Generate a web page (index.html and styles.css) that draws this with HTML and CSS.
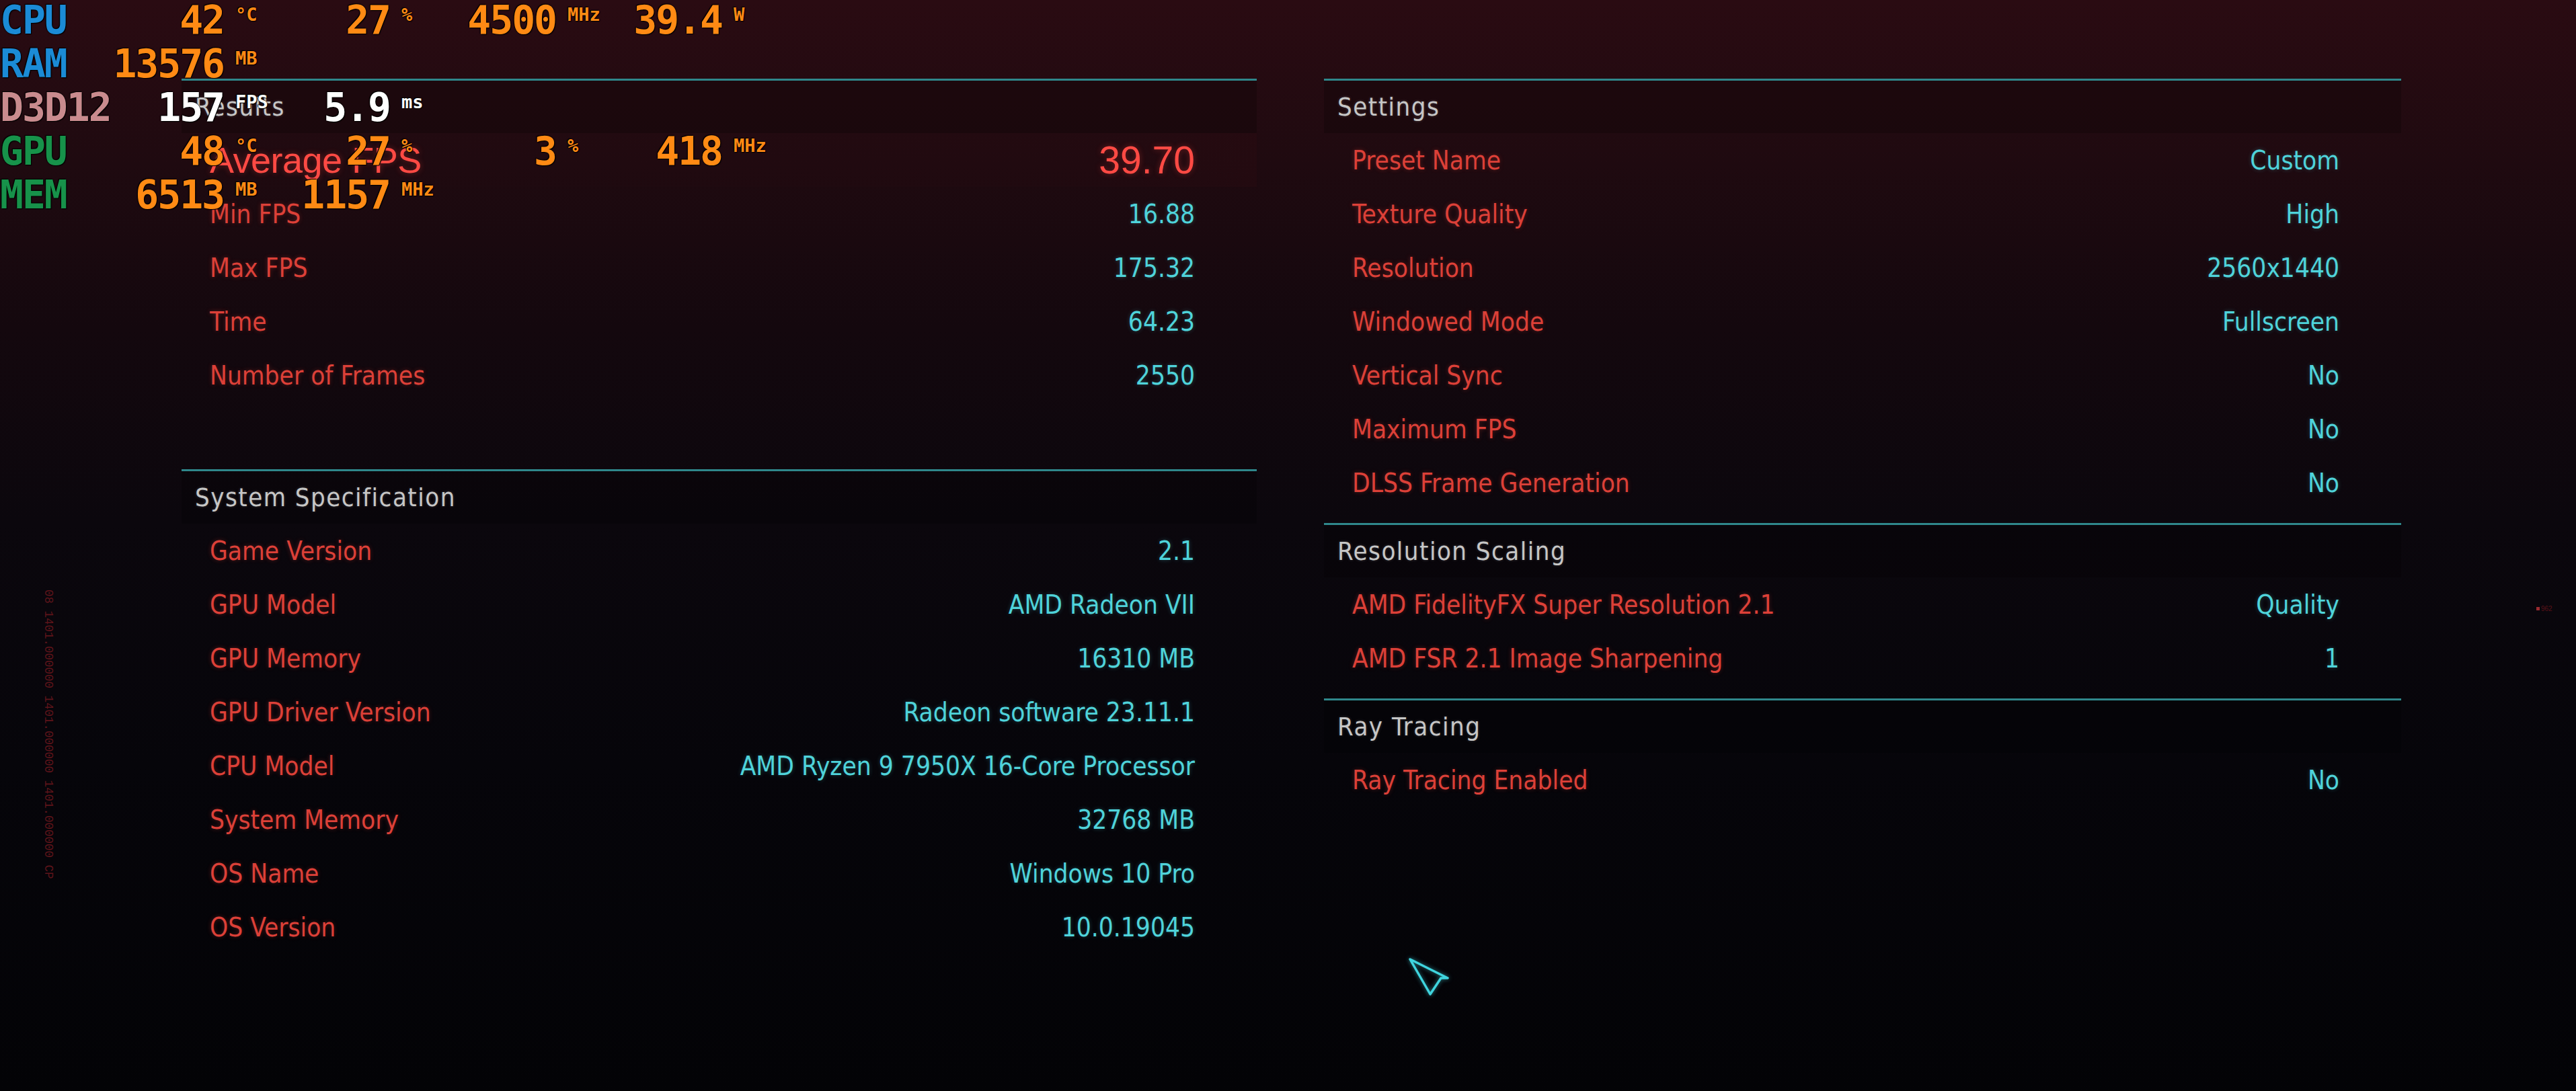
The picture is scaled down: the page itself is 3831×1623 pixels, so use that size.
FILE: index.html
```html
<!DOCTYPE html>
<html lang="en">
<head>
<meta charset="utf-8">
<title>Benchmark Results</title>
<link rel="stylesheet" href="styles.css">
</head>
<body>
<main class="page">
  <div class="col col-left">
    <section class="section results">
      <div class="sec-head">Results</div>
      <div class="row avg"><span class="k">Average FPS</span><span class="v">39.70</span></div>
      <div class="row"><span class="k">Min FPS</span><span class="v">16.88</span></div>
      <div class="row"><span class="k">Max FPS</span><span class="v">175.32</span></div>
      <div class="row"><span class="k">Time</span><span class="v">64.23</span></div>
      <div class="row"><span class="k">Number of Frames</span><span class="v">2550</span></div>
    </section>
    <section class="section">
      <div class="sec-head">System Specification</div>
      <div class="row"><span class="k">Game Version</span><span class="v">2.1</span></div>
      <div class="row"><span class="k">GPU Model</span><span class="v">AMD Radeon VII</span></div>
      <div class="row"><span class="k">GPU Memory</span><span class="v">16310 MB</span></div>
      <div class="row"><span class="k">GPU Driver Version</span><span class="v">Radeon software 23.11.1</span></div>
      <div class="row"><span class="k">CPU Model</span><span class="v">AMD Ryzen 9 7950X 16-Core Processor</span></div>
      <div class="row"><span class="k">System Memory</span><span class="v">32768 MB</span></div>
      <div class="row"><span class="k">OS Name</span><span class="v">Windows 10 Pro</span></div>
      <div class="row"><span class="k">OS Version</span><span class="v">10.0.19045</span></div>
    </section>
  </div>
  <div class="col col-right">
    <section class="section">
      <div class="sec-head">Settings</div>
      <div class="row"><span class="k">Preset Name</span><span class="v">Custom</span></div>
      <div class="row"><span class="k">Texture Quality</span><span class="v">High</span></div>
      <div class="row"><span class="k">Resolution</span><span class="v">2560x1440</span></div>
      <div class="row"><span class="k">Windowed Mode</span><span class="v">Fullscreen</span></div>
      <div class="row"><span class="k">Vertical Sync</span><span class="v">No</span></div>
      <div class="row"><span class="k">Maximum FPS</span><span class="v">No</span></div>
      <div class="row"><span class="k">DLSS Frame Generation</span><span class="v">No</span></div>
    </section>
    <section class="section">
      <div class="sec-head">Resolution Scaling</div>
      <div class="row"><span class="k">AMD FidelityFX Super Resolution 2.1</span><span class="v">Quality</span></div>
      <div class="row"><span class="k">AMD FSR 2.1 Image Sharpening</span><span class="v">1</span></div>
    </section>
    <section class="section">
      <div class="sec-head">Ray Tracing</div>
      <div class="row"><span class="k">Ray Tracing Enabled</span><span class="v">No</span></div>
    </section>
  </div>
</main>

<div class="osd">
  <div class="osd-row"><span class="osd-label c-blue">CPU</span><span class="ov">42</span><span class="ou">°C</span><span class="ov">27</span><span class="ou">%</span><span class="ov">4500</span><span class="ou">MHz</span><span class="ov">39.4</span><span class="ou">W</span></div>
  <div class="osd-row"><span class="osd-label c-blue">RAM</span><span class="ov">13576</span><span class="ou">MB</span></div>
  <div class="osd-row"><span class="osd-label c-pink">D3D12</span><span class="ov white">157</span><span class="ou white">FPS</span><span class="ov white">5.9</span><span class="ou white">ms</span></div>
  <div class="osd-row"><span class="osd-label c-green">GPU</span><span class="ov">48</span><span class="ou">°C</span><span class="ov">27</span><span class="ou">%</span><span class="ov">3</span><span class="ou">%</span><span class="ov">418</span><span class="ou">MHz</span></div>
  <div class="osd-row"><span class="osd-label c-green">MEM</span><span class="ov">6513</span><span class="ou">MB</span><span class="ov">1157</span><span class="ou">MHz</span></div>
</div>

<div class="side-id">08 1401.000000 1401.000000 1401.000000 CP</div>
<div class="side-mark"><span class="dot"></span>962</div>

<svg class="cursor" width="80" height="76" viewBox="0 0 80 76">
  <polygon points="8,8 64,36 54,36 38,60" fill="none" stroke="#3fd4de" stroke-width="3.5" stroke-linejoin="round"/>
</svg>
</body>
</html>
```

FILE: styles.css
```css
html, body {
  margin: 0;
  padding: 0;
}

body {
  width: 3831px;
  height: 1623px;
  overflow: hidden;
  position: relative;
  background: linear-gradient(180deg, #2a0b12 0%, #1f0a10 15%, #14080e 30%, #0b070d 48%, #06050a 70%, #030306 100%);
  font-family: "Liberation Sans Narrow", "DejaVu Sans Condensed", "Liberation Sans", sans-serif;
}

.page {
  display: flex;
  gap: 100px;
  padding: 117px 0 0 270px;
}

.col-left {
  width: 1599px;
}

.col-right {
  width: 1602px;
}

.section {
  border-top: 3px solid #2f878b;
  margin-bottom: 20px;
}

.section.results {
  margin-bottom: 100px;
}

.sec-head {
  height: 78px;
  display: flex;
  align-items: center;
  padding-left: 20px;
  background: rgba(0, 0, 0, 0.2);
  color: #c6c6c6;
  font-size: 38px;
  letter-spacing: 1.5px;
  text-shadow: 0 0 4px rgba(200, 200, 200, 0.25);
}

.row {
  height: 80px;
  display: flex;
  align-items: center;
  justify-content: space-between;
  padding: 0 92px 0 42px;
  font-size: 38.5px;
  letter-spacing: 0;
}

.row .k {
  color: #dc4038;
  text-shadow: 0 0 6px rgba(220, 60, 50, 0.35);
}

.row .v {
  color: #4fd3da;
  text-shadow: 0 0 6px rgba(80, 210, 220, 0.3);
}

.row.avg {
  background: linear-gradient(90deg, rgba(40, 8, 12, 0) 0%, rgba(60, 10, 16, 0.08) 85%, rgba(70, 12, 18, 0.12) 100%);
}

.row.avg .k,
.row.avg .v {
  font-family: "Liberation Sans", "DejaVu Sans", sans-serif;
  color: #ff4a44;
  text-shadow: 0 0 8px rgba(255, 70, 60, 0.35);
}

.row.avg .k {
  font-size: 54px;
  letter-spacing: -0.5px;
}

.row.avg .v {
  font-size: 57px;
}

/* On-screen display overlay */
.osd {
  position: absolute;
  top: -2px;
  left: 0;
  font-family: "DejaVu Sans Mono", "Liberation Mono", monospace;
  font-weight: bold;
}

.osd-row {
  display: grid;
  grid-template-columns: 168px 165px 82px 165px 82px 165px 82px 165px 82px;
  height: 65px;
  line-height: 65px;
  font-size: 58px;
  letter-spacing: -2px;
  color: #ff8a14;
  text-shadow: 0 0 2px #000, 1px 1px 1px #000, -1px -1px 1px #000;
}

.osd-label {
  grid-column: 1;
  white-space: nowrap;
}

.ov {
  text-align: right;
  white-space: nowrap;
}

.ou {
  font-size: 27px;
  line-height: 27px;
  letter-spacing: 0;
  padding-top: 10px;
  padding-left: 17px;
  white-space: nowrap;
}

.c-blue { color: #1b8bd6; }
.c-pink { color: #c98b8e; }
.c-green { color: #17924a; }
.white { color: #ffffff; }

.side-id {
  position: absolute;
  left: 62px;
  top: 877px;
  writing-mode: vertical-rl;
  font-family: "Liberation Mono", monospace;
  font-size: 17.5px;
  color: #5e141a;
  white-space: nowrap;
}

.side-mark {
  position: absolute;
  left: 3772px;
  top: 900px;
  font-family: "Liberation Sans", sans-serif;
  font-size: 10px;
  color: #5a1218;
  display: flex;
  align-items: center;
  gap: 2px;
}

.side-mark .dot {
  width: 5px;
  height: 5px;
  background: #9a2a30;
}

.cursor {
  position: absolute;
  left: 2089px;
  top: 1419px;
  filter: drop-shadow(0 0 3px rgba(63, 212, 222, 0.6));
}
```
